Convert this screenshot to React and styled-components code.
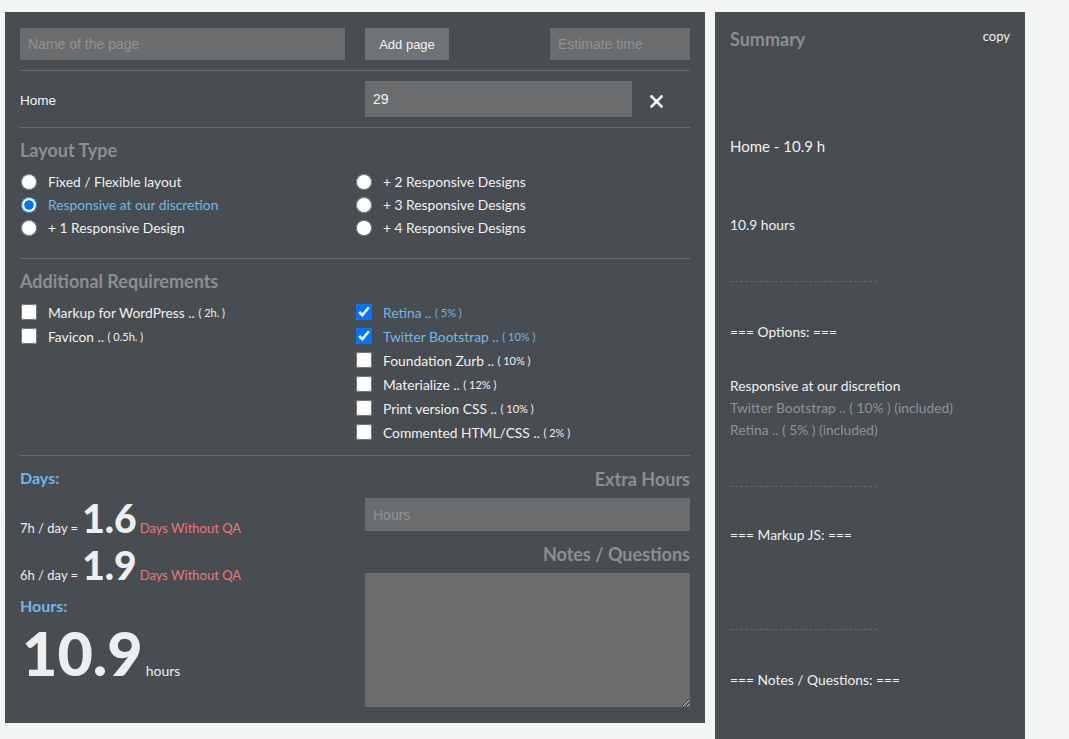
import styled, { createGlobalStyle } from 'styled-components';

const GlobalStyle = createGlobalStyle`
  body {
    margin: 0;
    background: #f4f5f5;
    font-family: Lato, "Noto Sans", sans-serif;
  }
  * { box-sizing: border-box; }
`;

const Page = styled.div`
  display: flex;
  align-items: flex-start;
  gap: 10px;
  padding: 12px 5px 0;
`;

const Main = styled.div`
  width: 700px;
  background: #474d51;
  padding: 16px 15px 16px;
  color: #f0f0f0;
`;

const TopRow = styled.div`
  display: flex;
  align-items: center;
  padding-bottom: 10px;
  border-bottom: 1px solid #676c6f;
`;

const Field = styled.input`
  height: ${p => p.$h || 32}px;
  width: ${p => p.$w}px;
  background: #6b6c6d;
  border: none;
  outline: none;
  padding: 0 8px;
  color: #f2f2f2;
  font-family: "Liberation Sans", Arial, sans-serif;
  font-size: 14px;
  margin-left: ${p => p.$ml || '0'};
  margin-right: ${p => p.$mr || '0'};
  &::placeholder { color: #909293; }
`;

const AddButton = styled.button`
  height: 32px;
  width: 84px;
  border: none;
  background: #6e7376;
  color: #f2f2f2;
  font-family: "Liberation Sans", Arial, sans-serif;
  font-size: 13px;
`;

const PageRow = styled.div`
  display: flex;
  align-items: center;
  padding: 10px 0;
  border-bottom: 1px solid #676c6f;
`;

const PageName = styled.div`
  width: 345px;
  font-family: "Liberation Sans", Arial, sans-serif;
  font-size: 13.5px;
  color: #f5f5f5;
  margin-top: 2px;
`;

const Remove = styled.span`
  margin-left: 18px;
  margin-top: 4px;
  display: flex;
`;

const Section = styled.div`
  padding: 11px 0 ${p => p.$pb}px;
  border-bottom: 1px solid #676c6f;
`;

const Heading = styled.h3`
  margin: 0 0 ${p => p.$mb ?? 8}px;
  font-size: 18px;
  font-weight: 700;
  color: #8b8f92;
  line-height: 22px;
  text-align: ${p => p.$align || 'left'};
`;

const Columns = styled.div`
  display: grid;
  grid-template-columns: 335px 335px;
`;

const Options = styled.div`
  display: flex;
  flex-direction: column;
`;

const Option = styled.label`
  display: flex;
  align-items: center;
  height: ${p => p.$h}px;
  font-size: 13.8px;
  color: ${p => (p.$on ? '#74b6e8' : '#f0f0f0')};
  white-space: pre;
  input {
    width: 16px;
    height: 16px;
    margin: 0 11px 0 1px;
  }
  small { font-size: 11px; }
`;

const Bottom = styled.div`
  display: grid;
  grid-template-columns: 325px 325px;
  column-gap: 20px;
  padding-top: 12px;
`;

const Blue = styled.div`
  color: #74b6e8;
  font-size: 16px;
  font-weight: 700;
  line-height: 20px;
  margin-top: ${p => p.$mt || 0}px;
`;

const DayLine = styled.div`
  display: flex;
  align-items: baseline;
  font-size: 13px;
  margin-top: ${p => p.$mt}px;
  color: #eeeeee;
  b {
    font-size: 39px;
    font-weight: 900;
    margin: 0 3px 0 4px;
    line-height: 42px;
  }
  span { color: #e8797e; }
`;

const Hours = styled.div`
  display: flex;
  align-items: baseline;
  margin-top: 6px;
  color: #eeeeee;
  font-size: 14px;
  b {
    font-size: 61px;
    font-weight: 900;
    line-height: 62px;
    margin: 0 3px 0 2px;
  }
`;

const Right = styled.div`
  display: flex;
  flex-direction: column;
`;

const Notes = styled.textarea`
  width: 325px;
  height: 134px;
  background: #6b6c6d;
  border: none;
  outline: none;
  display: block;
`;

const Summary = styled.div`
  width: 310px;
  height: 740px;
  background: #474d51;
  padding: 16px 15px;
  color: #f0f0f0;
  font-size: 13.8px;
`;

const SummaryHead = styled.div`
  display: flex;
  justify-content: space-between;
  align-items: flex-start;
  h3 {
    margin: 0;
    font-size: 18px;
    color: #8b8f92;
    line-height: 22px;
  }
  span { font-size: 13px; margin-top: 0; }
`;

const Line = styled.div`
  margin-top: ${p => p.$mt || 0}px;
  font-size: ${p => p.$fs || 13.8}px;
  line-height: 22px;
  color: ${p => (p.$dim ? '#8f9396' : '#f0f0f0')};
`;

const Dashed = styled.div`
  width: 147px;
  border-top: 1px dashed #61676a;
  margin-top: ${p => p.$mt}px;
`;

const radios = [
  ['Fixed / Flexible layout', false],
  ['Responsive at our discretion', true],
  ['+ 1 Responsive Design', false],
];
const radios2 = ['+ 2 Responsive Designs', '+ 3 Responsive Designs', '+ 4 Responsive Designs'];
const checks = [
  ['Markup for WordPress .. ', '( 2h. )', false],
  ['Favicon .. ', '( 0.5h. )', false],
];
const checks2 = [
  ['Retina .. ', '( 5% )', true],
  ['Twitter Bootstrap .. ', '( 10% )', true],
  ['Foundation Zurb .. ', '( 10% )', false],
  ['Materialize .. ', '( 12% )', false],
  ['Print version CSS .. ', '( 10% )', false],
  ['Commented HTML/CSS .. ', '( 2% )', false],
];

const CheckList = ({ items }) => (
  <Options>
    {items.map(([t, s, on]) => (
      <Option key={t} $h={24} $on={on}>
        <input type="checkbox" defaultChecked={on} />
        <span>{t}</span><small>{s}</small>
      </Option>
    ))}
  </Options>
);

export default function App() {
  return (
    <>
      <GlobalStyle />
      <Page>
        <Main>
          <TopRow>
            <Field $w={325} $mr="20px" placeholder="Name of the page" />
            <AddButton>Add page</AddButton>
            <Field $w={140} $ml="auto" placeholder="Estimate time" />
          </TopRow>
          <PageRow>
            <PageName>Home</PageName>
            <Field $w={267} $h={36} defaultValue="29" />
            <Remove>
              <svg width="13" height="13" viewBox="0 0 13 13">
                <path d="M1.5 1.5l10 10M11.5 1.5l-10 10" stroke="#fff" strokeWidth="2.6" strokeLinecap="square" />
              </svg>
            </Remove>
          </PageRow>
          <Section $pb={19}>
            <Heading $mb={9}>Layout Type</Heading>
            <Columns>
              <Options>
                {radios.map(([t, on]) => (
                  <Option key={t} $h={23} $on={on}>
                    <input type="radio" name="layout" defaultChecked={on} />
                    {t}
                  </Option>
                ))}
              </Options>
              <Options>
                {radios2.map(t => (
                  <Option key={t} $h={23}>
                    <input type="radio" name="layout" />
                    {t}
                  </Option>
                ))}
              </Options>
            </Columns>
          </Section>
          <Section $pb={11}>
            <Heading>Additional Requirements</Heading>
            <Columns>
              <CheckList items={checks} />
              <CheckList items={checks2} />
            </Columns>
          </Section>
          <Bottom>
            <div>
              <Blue>Days:</Blue>
              <DayLine $mt={9}>7h / day =<b>1.6</b><span>Days Without QA</span></DayLine>
              <DayLine $mt={5}>6h / day =<b>1.9</b><span>Days Without QA</span></DayLine>
              <Blue $mt={10}>Hours:</Blue>
              <Hours>
                <b>10.9</b>hours
              </Hours>
            </div>
            <Right>
              <Heading $align="right">Extra Hours</Heading>
              <Field $w={325} $h={33} placeholder="Hours" />
              <Heading $align="right" style={{ marginTop: 12 }}>Notes / Questions</Heading>
              <Notes />
            </Right>
          </Bottom>
        </Main>
        <Summary>
          <SummaryHead>
            <h3>Summary</h3>
            <span>copy</span>
          </SummaryHead>
          <Line $mt={85} $fs={15}>Home - 10.9 h</Line>
          <Line $mt={57}>10.9 hours</Line>
          <Dashed $mt={45} />
          <Line $mt={39}>=== Options: ===</Line>
          <Line $mt={32}>Responsive at our discretion</Line>
          <Line $dim>Twitter Bootstrap .. ( 10% ) (included)</Line>
          <Line $dim>Retina .. ( 5% ) (included)</Line>
          <Dashed $mt={45} />
          <Line $mt={37}>=== Markup JS: ===</Line>
          <Dashed $mt={83} />
          <Line $mt={39}>=== Notes / Questions: ===</Line>
        </Summary>
      </Page>
    </>
  );
}
